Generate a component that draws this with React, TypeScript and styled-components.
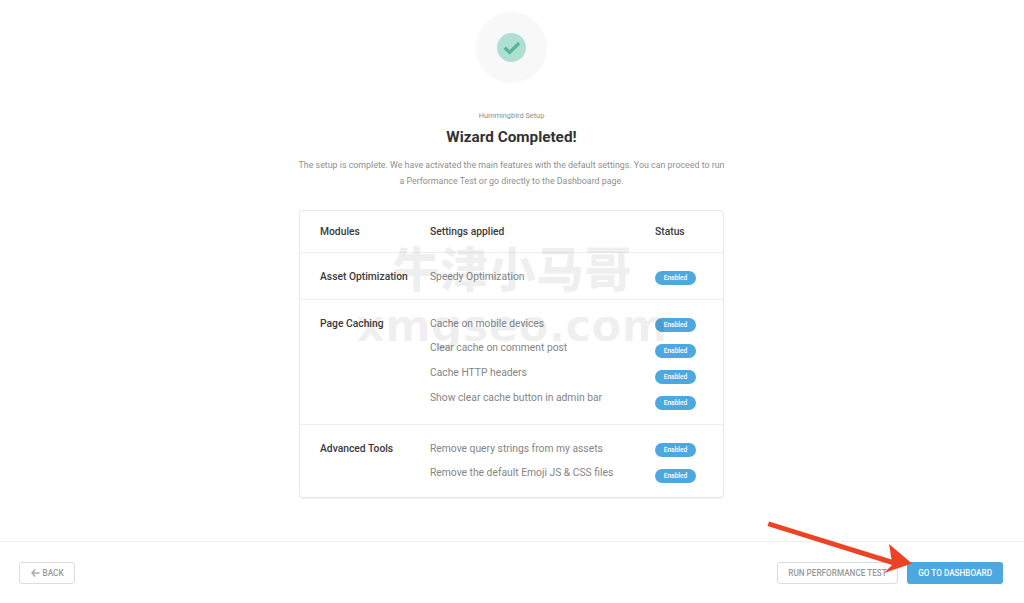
import styled, { createGlobalStyle } from 'styled-components';

const rows = [
	{ module: 'Asset Optimization', settings: ['Speedy Optimization'] },
	{
		module: 'Page Caching',
		settings: ['Cache on mobile devices', 'Clear cache on comment post', 'Cache HTTP headers', 'Show clear cache button in admin bar'],
	},
	{ module: 'Advanced Tools', settings: ['Remove query strings from my assets', 'Remove the default Emoji JS & CSS files'] },
];

const App = () => {
	return (
		<Page>
			<GlobalStyle />
			<Main>
				<Hero>
					<Badge>
						<svg width='18' height='14' viewBox='0 0 18 14' fill='none'>
							<path d='M1.6 6.8 L6.6 11.4 L16.2 2' stroke='#55b797' strokeWidth='3.4' />
						</svg>
					</Badge>
				</Hero>
				<Eyebrow>Hummingbird Setup</Eyebrow>
				<Title>Wizard Completed!</Title>
				<Intro>
					The setup is complete. We have activated the main features with the default settings. You can proceed to run
					<br />a Performance Test or go directly to the Dashboard page.
				</Intro>
				<Card>
					<HeadRow>
						<span>Modules</span>
						<span>Settings applied</span>
						<span>Status</span>
					</HeadRow>
					{rows.map((row) => (
						<Row key={row.module}>
							<ModuleName>{row.module}</ModuleName>
							<Settings>
								{row.settings.map((item) => (
									<li key={item}>{item}</li>
								))}
							</Settings>
							<Statuses>
								{row.settings.map((item) => (
									<Pill key={item}>Enabled</Pill>
								))}
							</Statuses>
						</Row>
					))}
				</Card>
			</Main>
			<Footer>
				<Button>
					<svg width='9' height='8' viewBox='0 0 9 8' fill='none'>
						<path d='M4.2 0.6 L1 4 L4.2 7.4 M1 4 H8.6' stroke='#aaa' strokeWidth='1.5' />
					</svg>
					BACK
				</Button>
				<Actions>
					<Button>RUN PERFORMANCE TEST</Button>
					<Button $primary>GO TO DASHBOARD</Button>
				</Actions>
			</Footer>
			<Watermark>
				<span>牛津小马哥</span>
				<span>xmgseo.com</span>
			</Watermark>
			<Arrow width='1024' height='603' viewBox='0 0 1024 603'>
				<path d='M769 521.5 L767.5 526 L892 565 L884 573 L912 563.5 L889 544 L891.5 559.5 Z' fill='#ec4325' />
			</Arrow>
		</Page>
	);
};

export default App;

const GlobalStyle = createGlobalStyle`
	html, body {
		margin: 0;
		padding: 0;
		background: #fff;
		overflow: hidden;
	}
	* {
		box-sizing: border-box;
	}
`;

const Page = styled.div`
	position: relative;
	width: 1024px;
	height: 603px;
	display: flex;
	flex-direction: column;
	overflow: hidden;
	font-family: Roboto, 'Liberation Sans', sans-serif;
	color: #333;
`;

const Main = styled.main`
	flex: 1;
	display: flex;
	flex-direction: column;
	align-items: center;
	padding: 12px 1px 0 0;
`;

const Hero = styled.div`
	width: 71px;
	height: 71px;
	border-radius: 50%;
	background: #f8f8f8;
	display: flex;
	align-items: center;
	justify-content: center;
`;

const Badge = styled.div`
	width: 29px;
	height: 29px;
	border-radius: 50%;
	background: #afdfd0;
	display: flex;
	align-items: center;
	justify-content: center;
`;

const Eyebrow = styled.div`
	margin-top: 27px;
	font-size: 7.4px;
	line-height: 12px;
	color: #8f8f8f;
`;

const Title = styled.h1`
	margin: 4px 0 0;
	font-size: 15.3px;
	line-height: 22px;
	font-weight: 700;
	color: #333;
`;

const Intro = styled.p`
	margin: 10px 0 0;
	font-size: 8.85px;
	line-height: 15.5px;
	color: #8f8f8f;
	text-align: center;
	white-space: nowrap;
`;

const Card = styled.section`
	width: 425px;
	height: 288px;
	margin-top: 21px;
	border: 1px solid #e8e8e8;
	border-radius: 4px;
	box-shadow: 0 1px 1px #f0f0f0;
`;

const HeadRow = styled.div`
	display: grid;
	grid-template-columns: 110px 225px 1fr;
	height: 42px;
	padding: 0 0 0 20px;
	align-items: center;
	font-size: 10.3px;
	font-weight: 500;
	color: #3a3a3a;
	border-bottom: 1px solid #eee;
`;

const Row = styled.div`
	display: grid;
	grid-template-columns: 110px 225px 1fr;
	padding: 15.5px 0 14.5px 20px;
	border-bottom: 1px solid #eee;

	&:last-child {
		border-bottom: 0;
	}
`;

const ModuleName = styled.div`
	font-size: 10.3px;
	line-height: 16px;
	font-weight: 500;
	color: #3a3a3a;
`;

const Settings = styled.ul`
	margin: 0;
	padding: 0;
	list-style: none;
	display: flex;
	flex-direction: column;
	gap: 8.8px;
	font-size: 10.3px;
	line-height: 16px;
	color: #858585;
`;

const Statuses = styled.div`
	display: flex;
	flex-direction: column;
	align-items: flex-start;
	gap: 12px;
	padding-top: 2px;
`;

const Pill = styled.span`
	width: 41px;
	height: 14px;
	border-radius: 7px;
	background: #4ea8e0;
	color: #fff;
	font-size: 6.6px;
	font-weight: 500;
	line-height: 14px;
	text-align: center;
`;

const Footer = styled.footer`
	height: 62px;
	padding: 20px 21px 0 19px;
	border-top: 1px solid #eee;
	display: flex;
	justify-content: space-between;
	align-items: flex-start;
`;

const Actions = styled.div`
	display: flex;
	gap: 9px;
`;

const Button = styled.button<{ $primary?: boolean }>`
	height: 22px;
	padding: 0 ${(p) => (p.$primary ? '11px' : '10.5px')};
	display: flex;
	align-items: center;
	gap: 3px;
	border-radius: 3px;
	border: ${(p) => (p.$primary ? '0' : '1px solid #ddd')};
	background: ${(p) => (p.$primary ? '#4ea8e0' : '#fff')};
	color: ${(p) => (p.$primary ? '#fff' : '#999')};
	font-family: inherit;
	font-size: 8.2px;
	font-weight: 500;
	white-space: nowrap;
`;

const Watermark = styled.div`
	position: absolute;
	left: 0;
	right: 0;
	top: 236px;
	display: flex;
	flex-direction: column;
	align-items: center;
	color: rgba(0, 0, 0, 0.06);
	pointer-events: none;
	span:first-child {
		font-family: 'Noto Sans CJK SC', sans-serif;
		font-weight: 900;
		font-size: 48px;
		line-height: 60px;
	}
	span:last-child {
		font-family: 'DejaVu Sans', sans-serif;
		font-weight: 700;
		font-size: 44px;
		line-height: 60px;
	}
`;

const Arrow = styled.svg`
	position: absolute;
	left: 0;
	top: 0;
	pointer-events: none;
`;
